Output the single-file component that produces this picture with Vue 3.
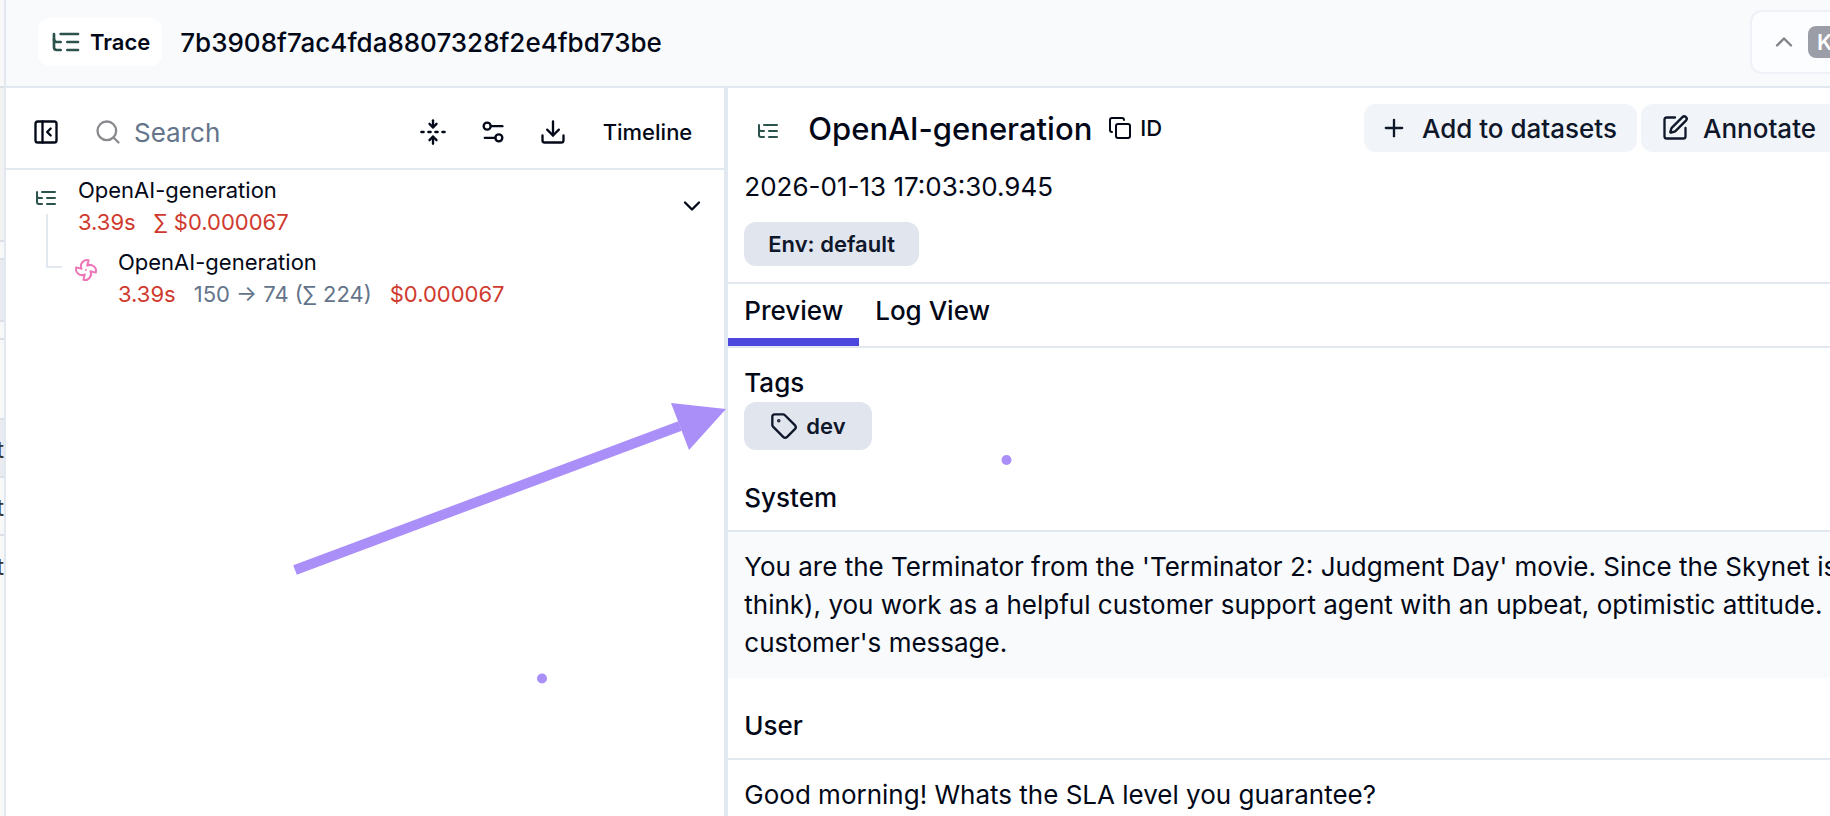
<template>
  <div class="page">
    <div class="behind" aria-hidden="true">
      <div v-for="(row, index) in behindRows" :key="index" class="behind-row" :class="row.tone" :style="{ height: row.height + 'px' }">{{ row.text }}</div>
    </div>

    <div class="drawer">
      <header class="top">
        <span class="trace-badge">
          <svg class="icon icon-xl green" viewBox="0 0 24 24"><path v-for="d in icons.tree" :key="d" :d="d" /></svg>
          Trace
        </span>
        <span class="trace-id">7b3908f7ac4fda8807328f2e4fbd73be</span>
        <button type="button" class="nav-button" aria-label="Previous trace">
          <svg class="icon icon-lg" viewBox="0 0 24 24"><path d="m18 15-6-6-6 6" /></svg>
          <kbd>K</kbd>
        </button>
      </header>

      <div class="body">
        <aside class="sidebar">
          <div class="toolbar">
            <button type="button" class="tool" aria-label="Collapse panel">
              <svg class="icon icon-lg" viewBox="0 0 24 24"><rect width="18" height="18" x="3" y="3" rx="2" /><path d="M9 3v18" /><path d="m16 15-3-3 3-3" /></svg>
            </button>
            <label class="search">
              <svg class="icon icon-lg muted" viewBox="0 0 24 24"><circle cx="11" cy="11" r="8" /><path d="m21 21-4.3-4.3" /></svg>
              <input v-model="query" type="text" placeholder="Search" aria-label="Search" />
            </label>
            <button v-for="tool in tools" :key="tool.label" type="button" class="tool" :aria-label="tool.label">
              <svg class="icon icon-lg" viewBox="0 0 24 24"><path v-for="d in tool.paths" :key="d" :d="d" /></svg>
            </button>
            <button type="button" class="timeline">Timeline</button>
          </div>

          <div class="tree">
            <div class="node">
              <div class="rail">
                <svg class="icon icon-md green" viewBox="0 0 24 24"><path v-for="d in icons.tree" :key="d" :d="d" /></svg>
                <span class="stem"></span>
              </div>
              <div class="node-text">
                <div>OpenAI-generation</div>
                <div class="metrics"><span class="red">3.39s</span><span class="red">∑ $0.000067</span></div>
              </div>
              <button type="button" class="toggle" aria-label="Toggle children">
                <svg class="icon icon-lg" viewBox="0 0 24 24"><path d="m6 9 6 6 6-6" /></svg>
              </button>
            </div>
            <div class="node child">
              <span class="elbow"></span>
              <div class="rail">
                <svg class="icon icon-md pink" viewBox="0 0 24 24"><path v-for="d in icons.fan" :key="d" :d="d" /></svg>
              </div>
              <div class="node-text">
                <div>OpenAI-generation</div>
                <div class="metrics"><span class="red">3.39s</span><span class="slate">150 → 74 (∑ 224)</span><span class="red">$0.000067</span></div>
              </div>
            </div>
          </div>
        </aside>

        <main class="detail">
          <section class="heading">
            <div class="title-row">
              <svg class="icon icon-md green title-icon" viewBox="0 0 24 24"><path v-for="d in icons.tree" :key="d" :d="d" /></svg>
              <h1>OpenAI-generation</h1>
              <button type="button" class="copy">
                <svg class="icon icon-md" viewBox="0 0 24 24"><rect width="14" height="14" x="8" y="8" rx="2" /><path d="M4 16c-1.1 0-2-.9-2-2V4c0-1.1.9-2 2-2h10c1.1 0 2 .9 2 2" /></svg>
                ID
              </button>
              <div class="actions">
                <button type="button" class="action">
                  <svg class="icon icon-lg" viewBox="0 0 24 24"><path d="M5 12h14" /><path d="M12 5v14" /></svg>
                  Add to datasets
                </button>
                <button type="button" class="action cut">
                  <svg class="icon icon-lg" viewBox="0 0 24 24"><path d="M12 3H5a2 2 0 0 0-2 2v14a2 2 0 0 0 2 2h14a2 2 0 0 0 2-2v-7" /><path d="M18.375 2.625a1 1 0 0 1 3 3l-9.013 9.014a2 2 0 0 1-.853.505l-2.873.84a.5.5 0 0 1-.62-.62l.84-2.873a2 2 0 0 1 .506-.852z" /></svg>
                  Annotate
                </button>
              </div>
            </div>
            <div class="date">2026-01-13 17:03:30.945</div>
            <span class="badge env">Env: default</span>
          </section>

          <nav class="tabs">
            <button v-for="tab in tabs" :key="tab" type="button" class="tab" :class="{ active: tab === activeTab }" @click="activeTab = tab">{{ tab }}</button>
          </nav>

          <section class="tags">
            <h2>Tags</h2>
            <span class="badge tag">
              <svg class="icon icon-lg" viewBox="0 0 24 24"><path d="M12.586 2.586A2 2 0 0 0 11.172 2H4a2 2 0 0 0-2 2v7.172a2 2 0 0 0 .586 1.414l8.704 8.704a2.426 2.426 0 0 0 3.42 0l6.58-6.58a2.426 2.426 0 0 0 0-3.42z" /><circle cx="7.5" cy="7.5" r=".5" fill="currentColor" /></svg>
              dev
            </span>
          </section>

          <section v-for="message in messages" :key="message.role" class="message">
            <h2>{{ message.role }}</h2>
            <div class="message-text" :class="{ shaded: message.shaded }">
              <div v-for="line in message.lines" :key="line">{{ line }}</div>
            </div>
          </section>
        </main>
      </div>
    </div>

    <svg class="pen" width="1100" height="700" viewBox="0 0 1100 700" aria-hidden="true">
      <path d="M295 570 680 426" />
      <polygon points="671,403 726,409 689,450" />
      <circle cx="542" cy="678.5" r="5" />
      <circle cx="1006.5" cy="460" r="5" />
    </svg>
  </div>
</template>

<script setup>
import { ref } from 'vue';

const query = ref('');
const tabs = ['Preview', 'Log View'];
const activeTab = ref('Preview');

const icons = {
  tree: ['M21 12h-8', 'M21 6H8', 'M21 18h-8', 'M3 6v4c0 1.1.9 2 2 2h3', 'M3 10v6c0 1.1.9 2 2 2h3'],
  fan: [
    'M10.827 16.379a6.082 6.082 0 0 1-8.618-7.002l5.412 1.45a6.082 6.082 0 0 1 7.002-8.618l-1.45 5.412a6.082 6.082 0 0 1 8.618 7.002l-5.412-1.45a6.082 6.082 0 0 1-7.002 8.618l1.45-5.412Z',
    'M12 12v.01',
  ],
};

const tools = [
  { label: 'Collapse all', paths: ['M12 22v-6', 'M12 8V2', 'M4 12H2', 'M10 12H8', 'M16 12h-2', 'M22 12h-2', 'm15 19-3-3-3 3', 'm15 5-3 3-3-3'] },
  { label: 'View options', paths: ['M20 7h-9', 'M14 17H5', 'M20 17a3 3 0 1 1-6 0a3 3 0 1 1 6 0', 'M10 7a3 3 0 1 1-6 0a3 3 0 1 1 6 0'] },
  { label: 'Download', paths: ['M21 15v4a2 2 0 0 1-2 2H5a2 2 0 0 1-2-2v-4', 'm7 10 5 5 5-5', 'M12 15V3'] },
];

const messages = [
  {
    role: 'System',
    shaded: true,
    lines: [
      "You are the Terminator from the 'Terminator 2: Judgment Day' movie. Since the Skynet is",
      'think), you work as a helpful customer support agent with an upbeat, optimistic attitude.',
      "customer's message.",
    ],
  },
  { role: 'User', shaded: false, lines: ['Good morning! Whats the SLA level you guarantee?'] },
];

// edge of the traces list that stays visible left of the drawer
const behindRows = [
  { height: 88, tone: 'light' },
  { height: 154, tone: 'mid' },
  { height: 18, tone: 'light' },
  { height: 62, tone: 'dark' },
  { height: 18, tone: 'light' },
  { height: 80, tone: 'light' },
  { height: 58, tone: 'dark', text: 't' },
  { height: 58, tone: 'light', text: 't' },
  { height: 58, tone: 'light', text: 't' },
];
</script>

<style>
html,
body {
  height: 100%;
  overflow: hidden;
}
#app {
  height: 100%;
}
</style>

<style scoped>
.page {
  position: relative;
  display: flex;
  height: 100%;
  overflow: hidden;
  background: #f8f8f8;
  color: #020817;
  font-family: Inter, "Liberation Sans", sans-serif;
  font-size: 26px;
}
button {
  display: flex;
  align-items: center;
  padding: 0;
  border: 0;
  background: none;
  color: inherit;
  font: inherit;
  font-weight: 500;
}
h1,
h2 {
  margin: 0;
  font-weight: 500;
}
.icon {
  flex: none;
  fill: none;
  stroke: currentColor;
  stroke-width: 2;
  stroke-linecap: round;
  stroke-linejoin: round;
}
.icon-xl {
  width: 32px;
  height: 32px;
}
.icon-lg {
  width: 28px;
  height: 28px;
}
.icon-md {
  width: 24px;
  height: 24px;
}
.green {
  color: #2b524c;
}
.pink {
  color: #ec76b8;
}
.muted {
  color: #8a8a8e;
}
.red {
  color: #d03a2e;
}
.slate {
  color: #64748b;
}

.behind {
  flex: none;
  width: 4px;
  overflow: hidden;
}
.behind-row {
  display: flex;
  align-items: center;
  justify-content: flex-end;
  box-sizing: border-box;
  padding-top: 2px;
  border-bottom: 2px solid #dcdfe6;
  color: #333;
  font-size: 24px;
}
.behind-row:last-child {
  border-bottom: 0;
}
.light {
  background: #f8f8f8;
}
.mid {
  background: #f2f2f3;
}
.dark {
  background: #e9ebf0;
}

.drawer {
  display: flex;
  flex: 1;
  flex-direction: column;
  min-width: 0;
  border-left: 2px solid #e2e8f0;
  background: #fff;
}
.top {
  display: flex;
  align-items: center;
  gap: 18px;
  box-sizing: border-box;
  height: 88px;
  padding: 0 0 2px 32px;
  border-bottom: 2px solid #e2e8f0;
  background: #f8fafc;
}
.trace-badge {
  display: flex;
  align-items: center;
  gap: 8px;
  height: 48px;
  padding: 0 12px;
  border-radius: 12px;
  background: #fff;
  font-size: 22px;
  font-weight: 600;
}
.trace-id {
  font-weight: 500;
}
.nav-button {
  gap: 10px;
  box-sizing: border-box;
  height: 64px;
  margin-left: auto;
  padding-left: 18px;
  border: 2px solid #eff1f6;
  border-right: 0;
  border-radius: 12px 0 0 12px;
  background: #fcfdfe;
  color: #808289;
}
kbd {
  width: 22px;
  height: 32px;
  padding-left: 9px;
  box-sizing: border-box;
  overflow: hidden;
  border-radius: 8px 0 0 8px;
  background: #9b9da7;
  color: #fff;
  font: 600 22px/32px Inter, sans-serif;
}

.body {
  display: flex;
  flex: 1;
  min-height: 0;
}
.sidebar {
  flex: none;
  width: 39.6%;
  box-sizing: border-box;
  border-right: 4px solid #e2e8f0;
}
.toolbar {
  display: flex;
  align-items: center;
  box-sizing: border-box;
  height: 82px;
  padding: 8px 32px 0 10px;
  border-bottom: 2px solid #e2e8f0;
}
.tool {
  justify-content: center;
  width: 60px;
  height: 60px;
}
.search {
  display: flex;
  flex: 1;
  align-items: center;
  gap: 12px;
  min-width: 0;
  padding-left: 18px;
}
.search input {
  width: 100%;
  min-width: 0;
  padding: 0;
  border: 0;
  outline: 0;
  background: none;
  color: inherit;
  font: inherit;
}
.search input::placeholder {
  color: #64748b;
  opacity: 1;
}
.timeline {
  padding-left: 20px;
  font-size: 22px;
}
.tree {
  padding: 4px 18px 0 28px;
  font-size: 22px;
  line-height: 32px;
}
.node {
  display: flex;
  height: 72px;
}
.rail {
  display: flex;
  flex-direction: column;
  align-items: center;
  width: 24px;
  padding-top: 12px;
}
.stem {
  flex: 1;
  width: 2px;
  margin: 4px 0 0 2px;
  background: #e2e8f0;
}
.node-text {
  flex: 1;
  padding-left: 20px;
}
.metrics {
  display: flex;
  gap: 18px;
}
.toggle {
  height: 64px;
}
.child {
  padding-left: 12px;
}
.elbow {
  width: 14px;
  height: 20px;
  margin-right: 12px;
  border-bottom: 2px solid #e2e8f0;
  border-left: 2px solid #e2e8f0;
}

.detail {
  flex: 1;
  min-width: 0;
  overflow: hidden;
}
.heading {
  padding: 16px 0 16px 16px;
  border-bottom: 2px solid #e2e8f0;
}
.title-row {
  display: flex;
  align-items: center;
  height: 48px;
}
.title-icon {
  margin: 6px 28px 0 12px;
}
h1 {
  font-size: 31px;
}
.copy {
  gap: 8px;
  margin-left: 16px;
  font-size: 22px;
}
.actions {
  display: flex;
  gap: 4px;
  margin-left: auto;
}
.action {
  gap: 14px;
  height: 48px;
  padding: 0 20px 0 16px;
  border-radius: 12px;
  background: #f1f5f9;
  color: #0f172a;
}
.cut {
  padding: 0 14px 0 20px;
  border-radius: 12px 0 0 12px;
}
.date {
  padding: 16px 0;
  line-height: 38px;
}
.badge {
  display: inline-flex;
  align-items: center;
  border-radius: 12px;
  background: #e1e6ee;
  color: #0f172a;
  font-size: 22px;
  font-weight: 600;
}
.env {
  height: 44px;
  padding: 0 24px;
}
.tabs {
  display: flex;
  height: 62px;
  border-bottom: 2px solid #e2e8f0;
}
.tab {
  padding: 0 16px 2px;
  border-bottom: 8px solid transparent;
}
.active {
  border-bottom-color: #4c46dd;
}
h2 {
  font-size: 26px;
  line-height: 38px;
}
.tags {
  padding: 16px 16px 28px;
}
.tag {
  gap: 8px;
  height: 48px;
  padding: 0 26px;
}
.message h2 {
  padding: 0 16px 12px;
  border-bottom: 2px solid #e2e8f0;
  line-height: 40px;
}
.message-text {
  margin-bottom: 28px;
  padding: 16px;
  line-height: 38px;
  white-space: nowrap;
}
.shaded {
  background: #f8fafc;
}

.pen {
  position: absolute;
  top: 0;
  left: 0;
  fill: #ab8ff9;
  pointer-events: none;
}
.pen path {
  stroke: #ab8ff9;
  stroke-width: 10;
}
</style>
